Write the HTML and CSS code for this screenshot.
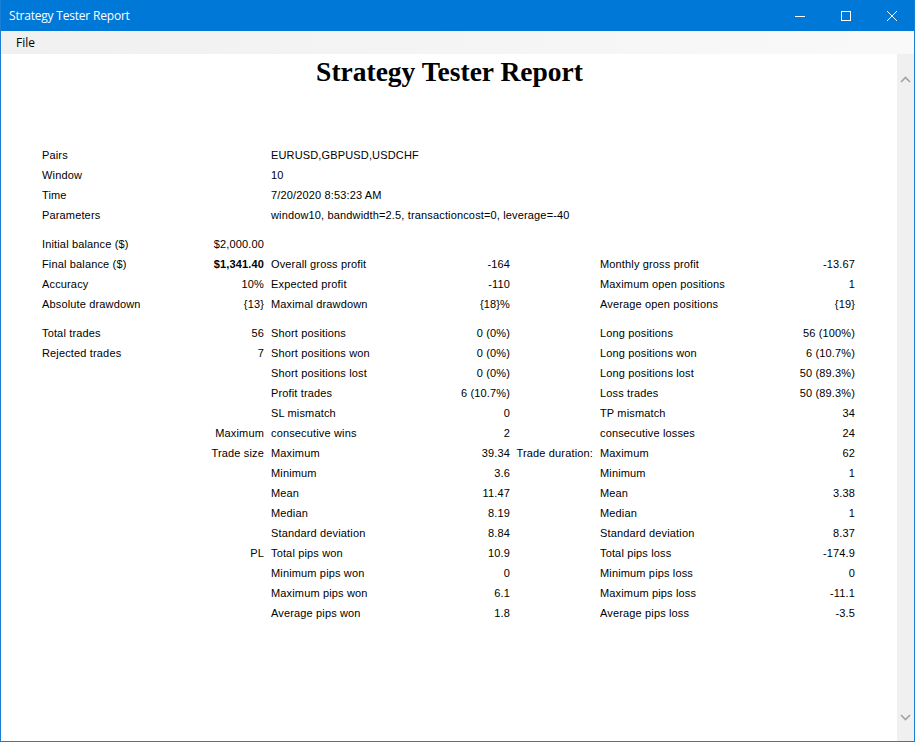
FILE: index.html
```html
<!DOCTYPE html>
<html>
<head>
<meta charset="utf-8">
<link rel="stylesheet" href="styles.css">
</head>
<body>
<div class="window">
  <div class="titlebar">
    <span class="title">Strategy Tester Report</span>
    <div class="controls">
      <span class="ctl"><svg width="12" height="12" viewBox="0 0 12 12"><path d="M1 6.5H11" stroke="#fff" stroke-width="1"/></svg></span>
      <span class="ctl"><svg width="12" height="12" viewBox="0 0 12 12"><rect x="1.5" y="1.5" width="9" height="9" fill="none" stroke="#fff" stroke-width="1"/></svg></span>
      <span class="ctl"><svg width="12" height="12" viewBox="0 0 12 12"><path d="M1 1L11 11M11 1L1 11" stroke="#fff" stroke-width="1"/></svg></span>
    </div>
  </div>
  <div class="menubar"><span class="menu-item">File</span></div>
  <div class="client">
    <div class="report">
      <h1 class="heading">Strategy Tester Report</h1>

      <div class="grid sec-info">
        <div class="c1">Pairs</div><div class="span">EURUSD,GBPUSD,USDCHF</div>
        <div class="c1">Window</div><div class="span">10</div>
        <div class="c1">Time</div><div class="span">7/20/2020 8:53:23 AM</div>
        <div class="c1">Parameters</div><div class="span">window10, bandwidth=2.5, transactioncost=0, leverage=-40</div>
      </div>

      <div class="grid sec-balance">
        <div class="c1">Initial balance ($)</div><div class="r">$2,000.00</div><div class="l"></div><div class="r"></div><div class="r"></div><div class="l"></div><div class="r"></div>
        <div class="c1">Final balance ($)</div><div class="r bold">$1,341.40</div><div class="l">Overall gross profit</div><div class="r">-164</div><div class="r"></div><div class="l">Monthly gross profit</div><div class="r">-13.67</div>
        <div class="c1">Accuracy</div><div class="r">10%</div><div class="l">Expected profit</div><div class="r">-110</div><div class="r"></div><div class="l">Maximum open positions</div><div class="r">1</div>
        <div class="c1">Absolute drawdown</div><div class="r">{13}</div><div class="l">Maximal drawdown</div><div class="r">{18}%</div><div class="r"></div><div class="l">Average open positions</div><div class="r">{19}</div>
      </div>

      <div class="grid sec-trades">
        <div class="c1">Total trades</div><div class="r">56</div><div class="l">Short positions</div><div class="r">0 (0%)</div><div class="r"></div><div class="l">Long positions</div><div class="r">56 (100%)</div>
        <div class="c1">Rejected trades</div><div class="r">7</div><div class="l">Short positions won</div><div class="r">0 (0%)</div><div class="r"></div><div class="l">Long positions won</div><div class="r">6 (10.7%)</div>
        <div class="c1"></div><div class="r"></div><div class="l">Short positions lost</div><div class="r">0 (0%)</div><div class="r"></div><div class="l">Long positions lost</div><div class="r">50 (89.3%)</div>
        <div class="c1"></div><div class="r"></div><div class="l">Profit trades</div><div class="r">6 (10.7%)</div><div class="r"></div><div class="l">Loss trades</div><div class="r">50 (89.3%)</div>
        <div class="c1"></div><div class="r"></div><div class="l">SL mismatch</div><div class="r">0</div><div class="r"></div><div class="l">TP mismatch</div><div class="r">34</div>
        <div class="c1"></div><div class="r">Maximum</div><div class="l">consecutive wins</div><div class="r">2</div><div class="r"></div><div class="l">consecutive losses</div><div class="r">24</div>
        <div class="c1"></div><div class="r">Trade size</div><div class="l">Maximum</div><div class="r">39.34</div><div class="r">Trade duration:</div><div class="l">Maximum</div><div class="r">62</div>
        <div class="c1"></div><div class="r"></div><div class="l">Minimum</div><div class="r">3.6</div><div class="r"></div><div class="l">Minimum</div><div class="r">1</div>
        <div class="c1"></div><div class="r"></div><div class="l">Mean</div><div class="r">11.47</div><div class="r"></div><div class="l">Mean</div><div class="r">3.38</div>
        <div class="c1"></div><div class="r"></div><div class="l">Median</div><div class="r">8.19</div><div class="r"></div><div class="l">Median</div><div class="r">1</div>
        <div class="c1"></div><div class="r"></div><div class="l">Standard deviation</div><div class="r">8.84</div><div class="r"></div><div class="l">Standard deviation</div><div class="r">8.37</div>
        <div class="c1"></div><div class="r">PL</div><div class="l">Total pips won</div><div class="r">10.9</div><div class="r"></div><div class="l">Total pips loss</div><div class="r">-174.9</div>
        <div class="c1"></div><div class="r"></div><div class="l">Minimum pips won</div><div class="r">0</div><div class="r"></div><div class="l">Minimum pips loss</div><div class="r">0</div>
        <div class="c1"></div><div class="r"></div><div class="l">Maximum pips won</div><div class="r">6.1</div><div class="r"></div><div class="l">Maximum pips loss</div><div class="r">-11.1</div>
        <div class="c1"></div><div class="r"></div><div class="l">Average pips won</div><div class="r">1.8</div><div class="r"></div><div class="l">Average pips loss</div><div class="r">-3.5</div>
      </div>
    </div>
    <div class="scrollbar">
      <span class="arrow"><svg width="11" height="7" viewBox="0 0 11 7"><path d="M1 6L5.5 1.5L10 6" fill="none" stroke="#a3a3a3" stroke-width="1.6"/></svg></span>
      <span class="arrow"><svg width="11" height="7" viewBox="0 0 11 7"><path d="M1 1L5.5 5.5L10 1" fill="none" stroke="#a3a3a3" stroke-width="1.6"/></svg></span>
    </div>
  </div>
</div>
</body>
</html>
```

FILE: styles.css
```css
html, body {
  margin: 0;
  padding: 0;
  background: #ffffff;
}

.window {
  width: 915px;
  height: 742px;
  box-sizing: border-box;
  display: flex;
  flex-direction: column;
  border-left: 1px solid #1a7fd4;
  border-right: 1px solid #1a7fd4;
  border-bottom: 1px solid #1a7fd4;
  overflow: hidden;
}

.titlebar {
  height: 31px;
  flex: none;
  background: #0078d7;
  display: flex;
  align-items: center;
  justify-content: space-between;
  margin: 0 -1px;
}

.title {
  color: #ffffff;
  font-family: "Open Sans", "Noto Sans", sans-serif;
  font-size: 12px;
  padding-left: 9px;
  letter-spacing: -0.2px;
}

.controls {
  display: flex;
  height: 31px;
}

.ctl {
  width: 46px;
  height: 31px;
  display: flex;
  align-items: center;
  justify-content: center;
}

.menubar {
  height: 23px;
  flex: none;
  background: linear-gradient(to right, #f0f0f0, #f9f9f9);
  display: flex;
  align-items: center;
}

.menu-item {
  font-family: "Open Sans", "Noto Sans", sans-serif;
  font-size: 12px;
  color: #000;
  padding-left: 15px;
}

.client {
  flex: 1;
  display: flex;
  min-height: 0;
}

.report {
  flex: 1;
  font-family: "Liberation Sans", Arial, sans-serif;
  font-size: 11px;
  letter-spacing: 0.15px;
  color: #000;
  padding-left: 41px;
}

.heading {
  font-family: "Liberation Serif", "Times New Roman", serif;
  font-size: 27.5px;
  font-weight: bold;
  line-height: 36px;
  letter-spacing: 0;
  margin: 0;
  text-align: center;
  padding-right: 40px;
}

.grid {
  display: grid;
  grid-template-columns: 150px 72px 167px 79px 83px 167px 95px;
  grid-auto-rows: 20px;
  line-height: 20px;
  white-space: nowrap;
}

.sec-info { margin-top: 55px; }
.sec-balance { margin-top: 9px; }
.sec-trades { margin-top: 9px; }

.c1 { text-align: left; }
.r { text-align: right; }
.l { text-align: left; padding-left: 7px; }
.span { grid-column: 3 / -1; padding-left: 7px; }
.bold { font-weight: bold; }

.scrollbar {
  width: 17px;
  flex: none;
  background: #f0f0f0;
  display: flex;
  flex-direction: column;
  justify-content: space-between;
  align-items: center;
  padding: 17px 0 15px;
}

.arrow {
  display: flex;
  width: 17px;
  height: 17px;
  align-items: center;
  justify-content: center;
}
```
